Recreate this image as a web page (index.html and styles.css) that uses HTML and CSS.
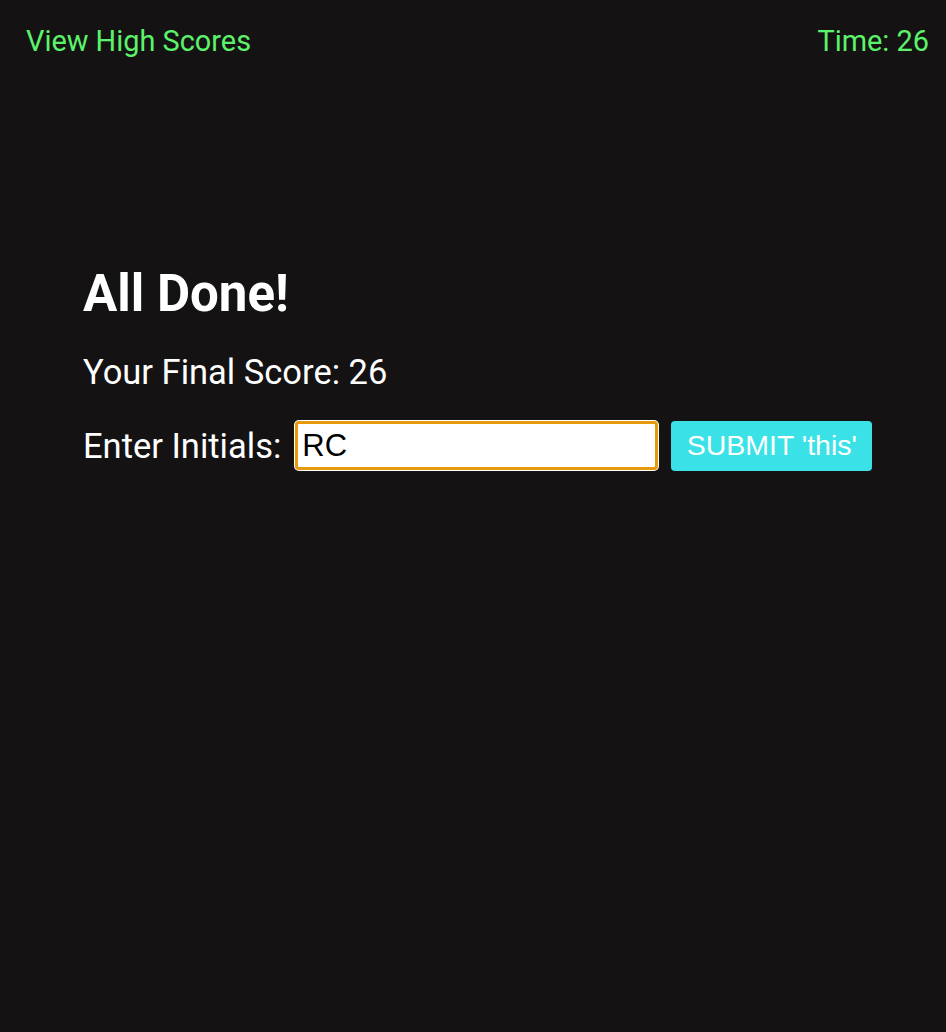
FILE: index.html
```html
<!DOCTYPE html>
<html lang="en">
<head>
<meta charset="utf-8">
<title>Quiz - All Done</title>
<link rel="stylesheet" href="styles.css">
</head>
<body>
<header class="topbar">
  <a class="highscores" href="#">View High Scores</a>
  <span class="timer">Time: 26</span>
</header>
<main class="done">
  <h1 class="done-title">All Done!</h1>
  <p class="final-score">Your Final Score: 26</p>
  <form class="initials-form">
    <label class="initials-label" for="initials">Enter Initials:</label>
    <input class="initials-input" id="initials" type="text" value="RC">
    <button class="submit-btn" type="button">SUBMIT 'this'</button>
  </form>
</main>
</body>
</html>
```

FILE: styles.css
```css
html, body {
  margin: 0;
  padding: 0;
  background: #141213;
  height: 100%;
}

body {
  font-family: Roboto, "Liberation Sans", sans-serif;
  color: #ffffff;
}

.topbar {
  display: flex;
  justify-content: space-between;
  align-items: flex-start;
  padding: 25px 17px 0 26px;
  font-size: 28.9px;
  line-height: 1.172;
}

.highscores {
  color: #5cf26b;
  text-decoration: none;
}

.timer {
  color: #5cf26b;
}

.done {
  padding: 0 0 0 83px;
  margin-top: 204px;
}

.done-title {
  margin: 0;
  font-size: 51px;
  font-weight: 700;
  line-height: 61px;
}

.final-score {
  margin: 28px 0 0 0;
  font-size: 34.5px;
  line-height: 41px;
}

.initials-form {
  display: flex;
  align-items: center;
  margin-top: 28px;
}

.initials-label {
  font-size: 34.5px;
  line-height: 40px;
  margin-right: 13px;
}

.initials-input {
  box-sizing: border-box;
  width: 363px;
  height: 49px;
  margin: 0 13px 0 1px;
  padding: 0 4px;
  border: 3px solid #e6990b;
  border-radius: 4px;
  box-shadow: 0 0 0 1px #ffffff;
  background: #ffffff;
  color: #000000;
  font-family: "Liberation Sans", Arial, sans-serif;
  font-size: 31px;
  outline: none;
}

.submit-btn {
  box-sizing: border-box;
  width: 201px;
  height: 50px;
  padding: 0;
  border: none;
  border-radius: 4px;
  background: #3ae2e7;
  color: #ffffff;
  font-family: "Liberation Sans", Arial, sans-serif;
  font-size: 28.5px;
  cursor: pointer;
}
```
